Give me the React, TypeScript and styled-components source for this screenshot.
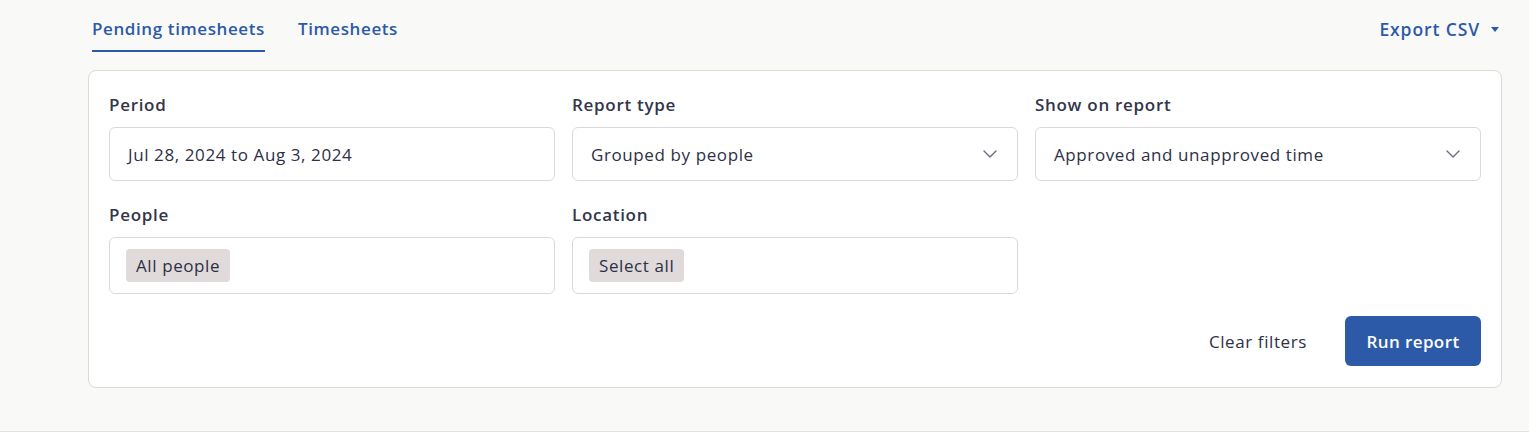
import React from 'react';
import styled, { createGlobalStyle } from 'styled-components';

const GlobalStyle = createGlobalStyle`
    html, body {
        margin: 0;
        padding: 0;
        background: #f9f9f8;
    }
    body {
        font-family: "Open Sans", "Noto Sans", sans-serif;
        color: #2e3046;
        letter-spacing: 0.6px;
    }
`;

const Page = styled.div`
    height: 431px;
    border-bottom: 1px solid #e4e2e0;
    padding: 0 27px 0 88px;
`;

const TopBar = styled.div`
    display: flex;
    justify-content: space-between;
    align-items: flex-start;
    height: 70px;
`;

const Tabs = styled.div`
    display: flex;
    gap: 33px;
    padding-left: 4px;
`;

const Tab = styled.div<{ active?: boolean }>`
    box-sizing: border-box;
    height: 52px;
    padding-top: 17px;
    font-size: 17px;
    font-weight: 600;
    letter-spacing: 0.6px;
    color: #2c5aa8;
    border-bottom: 2px solid ${p => (p.active ? '#2c5aa8' : 'transparent')};
    cursor: pointer;
`;

const Export = styled.div`
    display: flex;
    align-items: center;
    gap: 11px;
    padding-top: 17px;
    padding-right: 3px;
    font-size: 17.5px;
    font-weight: 600;
    letter-spacing: 0.9px;
    color: #2c5aa8;
    cursor: pointer;
`;

const Caret = styled.span`
    width: 0;
    height: 0;
    border-left: 4px solid transparent;
    border-right: 4px solid transparent;
    border-top: 5px solid #2c5aa8;
`;

const Card = styled.div`
    background: #fff;
    border: 1px solid #dedad8;
    border-radius: 8px;
    padding: 23px 20px 21px;
`;

const Grid = styled.div`
    display: grid;
    grid-template-columns: repeat(3, 1fr);
    column-gap: 17px;
    row-gap: 23px;
`;

const Field = styled.div`
    display: flex;
    flex-direction: column;
`;

const Label = styled.div`
    font-size: 17px;
    font-weight: 600;
    line-height: 22px;
    letter-spacing: 0.7px;
    margin-bottom: 11px;
    color: #33354a;
`;

const Input = styled.div<{ chips?: boolean }>`
    display: flex;
    align-items: center;
    justify-content: space-between;
    box-sizing: border-box;
    min-height: ${p => (p.chips ? '57px' : '54px')};
    padding: ${p => (p.chips ? '11px 16px' : '0 20px 0 18px')};
    border: 1px solid #dcd8d8;
    border-radius: 6px;
    font-size: 17px;
    color: #2e3046;
`;

const Chip = styled.span`
    display: inline-flex;
    align-items: center;
    height: 33px;
    padding: 0 10px;
    border-radius: 4px;
    background: #e0dada;
    font-size: 17px;
    color: #2e3046;
`;

const Chevron = () => (
    <svg width="14" height="8" viewBox="0 0 14 8" fill="none">
        <path d="M1 1l6 6 6-6" stroke="#6b6d80" strokeWidth="1.4" strokeLinecap="round" strokeLinejoin="round" />
    </svg>
);

const Actions = styled.div`
    display: flex;
    justify-content: flex-end;
    align-items: center;
    gap: 22px;
    margin-top: 22px;
`;

const TextButton = styled.button`
    border: none;
    background: none;
    font-family: inherit;
    letter-spacing: inherit;
    font-size: 17px;
    color: #2e3046;
    padding: 0 16px;
    cursor: pointer;
`;

const PrimaryButton = styled.button`
    height: 50px;
    width: 136px;
    border: none;
    border-radius: 6px;
    background: #2c5aa8;
    color: #fff;
    font-family: inherit;
    letter-spacing: 0.4px;
    font-size: 17px;
    font-weight: 600;
    cursor: pointer;
`;

const App: React.FC = () => {
    return (
        <>
            <GlobalStyle />
            <Page>
                <TopBar>
                    <Tabs>
                        <Tab active>Pending timesheets</Tab>
                        <Tab>Timesheets</Tab>
                    </Tabs>
                    <Export>
                        Export CSV
                        <Caret />
                    </Export>
                </TopBar>
                <Card>
                    <Grid>
                        <Field>
                            <Label>Period</Label>
                            <Input>Jul 28, 2024 to Aug 3, 2024</Input>
                        </Field>
                        <Field>
                            <Label>Report type</Label>
                            <Input>
                                Grouped by people
                                <Chevron />
                            </Input>
                        </Field>
                        <Field>
                            <Label>Show on report</Label>
                            <Input>
                                Approved and unapproved time
                                <Chevron />
                            </Input>
                        </Field>
                        <Field>
                            <Label>People</Label>
                            <Input chips>
                                <Chip>All people</Chip>
                            </Input>
                        </Field>
                        <Field>
                            <Label>Location</Label>
                            <Input chips>
                                <Chip>Select all</Chip>
                            </Input>
                        </Field>
                    </Grid>
                    <Actions>
                        <TextButton>Clear filters</TextButton>
                        <PrimaryButton>Run report</PrimaryButton>
                    </Actions>
                </Card>
            </Page>
        </>
    );
};

export default App;
